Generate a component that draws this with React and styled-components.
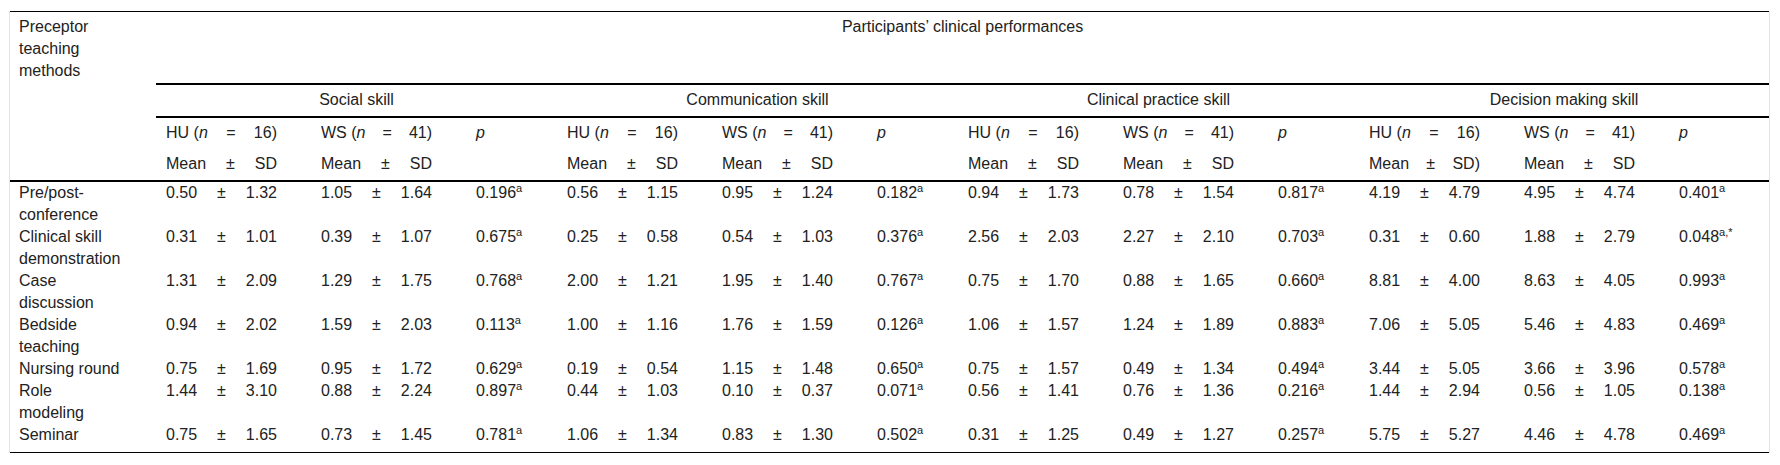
import styled, { createGlobalStyle } from "styled-components";

const GlobalStyle = createGlobalStyle`
  body {
    margin: 0;
    background: #fff;
    font-family: "Liberation Sans", Arial, sans-serif;
    color: #222;
  }
`;

const Page = styled.div`
  padding: 11px 10px 12px 9px;
`;

const Frame = styled.div`
  border-left: 1px solid #e4e4e4;
  border-right: 1px solid #e4e4e4;
`;

const Table = styled.table`
  width: 1759px;
  table-layout: fixed;
  border-collapse: separate;
  border-spacing: 0;
  border-top: 1px solid #000;
  border-bottom: 1px solid #000;
  font-size: 16px;
  line-height: 22px;

  tbody tr:last-child td {
    padding-bottom: 6px;
  }
`;

const Th = styled.th`
  font-weight: normal;
  text-align: ${(p) => (p.$center ? "center" : "left")};
  vertical-align: top;
  padding: 4px 10px ${(p) => (p.$tall ? "45px" : "5px")};
  padding-left: ${(p) => (p.$first ? "9px" : "10px")};
  border-bottom: ${(p) => (p.$rule ? "2px solid #000" : "none")};
  white-space: pre-line;
`;

const Td = styled.td`
  vertical-align: top;
  padding: 0 10px;
  padding-left: ${(p) => (p.$first ? "9px" : "10px")};
  white-space: pre-line;
`;

// "Mean ± SD" parts are spread over a fixed width, like the justified cells of the source
const Spread = styled.div`
  display: flex;
  justify-content: space-between;
  width: 111px;
  white-space: nowrap;
`;

const Sup = styled.sup`
  font-size: 11px;
  line-height: 0;
  vertical-align: 6px;
`;

const groups = [
  "Social skill",
  "Communication skill",
  "Clinical practice skill",
  "Decision making skill",
];

const widths = [146, 155, 155, 91, 155, 155, 91, 155, 155, 91, 155, 155, 100];

const rows = [
  {
    label: "Pre/post-\nconference",
    cells: [
      ["0.50", "1.32", "1.05", "1.64", "0.196", "a"],
      ["0.56", "1.15", "0.95", "1.24", "0.182", "a"],
      ["0.94", "1.73", "0.78", "1.54", "0.817", "a"],
      ["4.19", "4.79", "4.95", "4.74", "0.401", "a"],
    ],
  },
  {
    label: "Clinical skill\ndemonstration",
    cells: [
      ["0.31", "1.01", "0.39", "1.07", "0.675", "a"],
      ["0.25", "0.58", "0.54", "1.03", "0.376", "a"],
      ["2.56", "2.03", "2.27", "2.10", "0.703", "a"],
      ["0.31", "0.60", "1.88", "2.79", "0.048", "a,*"],
    ],
  },
  {
    label: "Case\ndiscussion",
    cells: [
      ["1.31", "2.09", "1.29", "1.75", "0.768", "a"],
      ["2.00", "1.21", "1.95", "1.40", "0.767", "a"],
      ["0.75", "1.70", "0.88", "1.65", "0.660", "a"],
      ["8.81", "4.00", "8.63", "4.05", "0.993", "a"],
    ],
  },
  {
    label: "Bedside\nteaching",
    cells: [
      ["0.94", "2.02", "1.59", "2.03", "0.113", "a"],
      ["1.00", "1.16", "1.76", "1.59", "0.126", "a"],
      ["1.06", "1.57", "1.24", "1.89", "0.883", "a"],
      ["7.06", "5.05", "5.46", "4.83", "0.469", "a"],
    ],
  },
  {
    label: "Nursing round",
    cells: [
      ["0.75", "1.69", "0.95", "1.72", "0.629", "a"],
      ["0.19", "0.54", "1.15", "1.48", "0.650", "a"],
      ["0.75", "1.57", "0.49", "1.34", "0.494", "a"],
      ["3.44", "5.05", "3.66", "3.96", "0.578", "a"],
    ],
  },
  {
    label: "Role\nmodeling",
    cells: [
      ["1.44", "3.10", "0.88", "2.24", "0.897", "a"],
      ["0.44", "1.03", "0.10", "0.37", "0.071", "a"],
      ["0.56", "1.41", "0.76", "1.36", "0.216", "a"],
      ["1.44", "2.94", "0.56", "1.05", "0.138", "a"],
    ],
  },
  {
    label: "Seminar",
    cells: [
      ["0.75", "1.65", "0.73", "1.45", "0.781", "a"],
      ["1.06", "1.34", "0.83", "1.30", "0.502", "a"],
      ["0.31", "1.25", "0.49", "1.27", "0.257", "a"],
      ["5.75", "5.27", "4.46", "4.78", "0.469", "a"],
    ],
  },
];

const MeanSd = ({ mean, sd }) => (
  <Spread>
    <span>{mean}</span>
    <span>±</span>
    <span>{sd}</span>
  </Spread>
);

const Count = ({ group, n }) => (
  <Spread>
    <span>
      {group} (<i>n</i>
    </span>
    <span>=</span>
    <span>{n})</span>
  </Spread>
);

export default function App() {
  return (
    <>
      <GlobalStyle />
      <Page>
        <Frame>
          <Table>
            <colgroup>
              {widths.map((w, i) => (
                <col key={i} style={{ width: w }} />
              ))}
            </colgroup>
            <thead>
              <tr>
                <Th $first $rule rowSpan={4}>
                  {"Preceptor\nteaching\nmethods"}
                </Th>
                <Th $center $rule $tall colSpan={12}>
                  Participants’ clinical performances
                </Th>
              </tr>
              <tr>
                {groups.map((g) => (
                  <Th key={g} $center $rule colSpan={3}>
                    {g}
                  </Th>
                ))}
              </tr>
              <tr>
                {groups.map((g) => [
                  <Th key={g + "hu"}>
                    <Count group="HU" n="16" />
                  </Th>,
                  <Th key={g + "ws"}>
                    <Count group="WS" n="41" />
                  </Th>,
                  <Th key={g + "p"}>
                    <i>p</i>
                  </Th>,
                ])}
              </tr>
              <tr>
                {groups.map((g, i) => [
                  <Th key={g + "hu"} $rule>
                    <MeanSd mean="Mean" sd={i === 3 ? "SD)" : "SD"} />
                  </Th>,
                  <Th key={g + "ws"} $rule>
                    <MeanSd mean="Mean" sd="SD" />
                  </Th>,
                  <Th key={g + "p"} $rule />,
                ])}
              </tr>
            </thead>
            <tbody>
              {rows.map((row) => (
                <tr key={row.label}>
                  <Td $first>{row.label}</Td>
                  {row.cells.map((c, i) => [
                    <Td key={i + "hu"}>
                      <MeanSd mean={c[0]} sd={c[1]} />
                    </Td>,
                    <Td key={i + "ws"}>
                      <MeanSd mean={c[2]} sd={c[3]} />
                    </Td>,
                    <Td key={i + "p"}>
                      {c[4]}
                      <Sup>{c[5]}</Sup>
                    </Td>,
                  ])}
                </tr>
              ))}
            </tbody>
          </Table>
        </Frame>
      </Page>
    </>
  );
}
